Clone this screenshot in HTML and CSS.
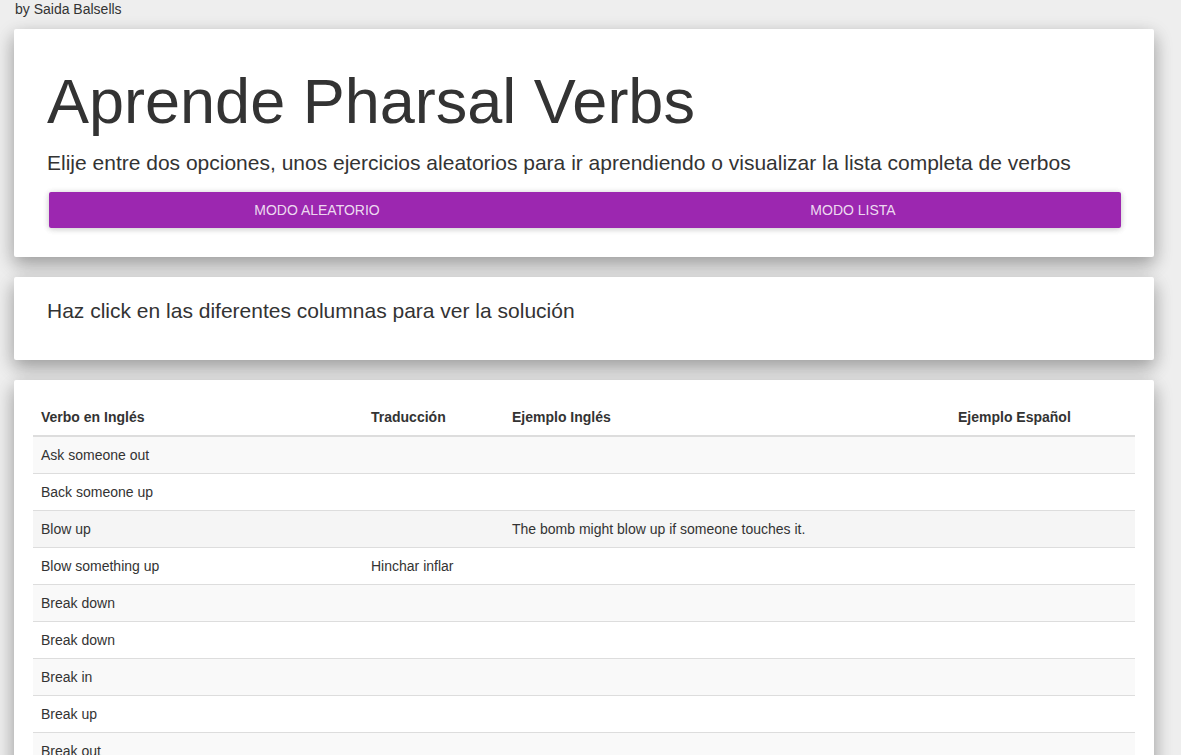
FILE: index.html
```html
<!DOCTYPE html>
<html lang="es">
<head>
<meta charset="utf-8">
<title>Aprende Pharsal Verbs</title>
<link rel="stylesheet" href="styles.css">
</head>
<body>
<div class="author">by Saida Balsells</div>
<main class="page">
  <section class="card hero">
    <h1 class="hero-title">Aprende Pharsal Verbs</h1>
    <p class="hero-text">Elije entre dos opciones, unos ejercicios aleatorios para ir aprendiendo o visualizar la lista completa de verbos</p>
    <div class="btn-group">
      <button class="btn">Modo aleatorio</button>
      <button class="btn">Modo lista</button>
    </div>
  </section>
  <section class="card hint">
    <p class="hint-text">Haz click en las diferentes columnas para ver la solución</p>
  </section>
  <section class="card table-card">
    <table class="verbs">
      <thead>
        <tr>
          <th class="c1">Verbo en Inglés</th>
          <th class="c2">Traducción</th>
          <th class="c3">Ejemplo Inglés</th>
          <th class="c4">Ejemplo Español</th>
        </tr>
      </thead>
      <tbody>
        <tr><td>Ask someone out</td><td></td><td></td><td></td></tr>
        <tr><td>Back someone up</td><td></td><td></td><td></td></tr>
        <tr class="hover"><td>Blow up</td><td></td><td>The bomb might blow up if someone touches it.</td><td></td></tr>
        <tr><td>Blow something up</td><td>Hinchar inflar</td><td></td><td></td></tr>
        <tr><td>Break down</td><td></td><td></td><td></td></tr>
        <tr><td>Break down</td><td></td><td></td><td></td></tr>
        <tr><td>Break in</td><td></td><td></td><td></td></tr>
        <tr><td>Break up</td><td></td><td></td><td></td></tr>
        <tr><td>Break out</td><td></td><td></td><td></td></tr>
        <tr><td>Bring someone down</td><td></td><td></td><td></td></tr>
        <tr><td>Bring someone up</td><td></td><td></td><td></td></tr>
      </tbody>
    </table>
  </section>
</main>
</body>
</html>
```
FILE: styles.css
```css
html, body {
  margin: 0;
  padding: 0;
}
body {
  background: #eeeeee;
  font-family: "Liberation Sans", Arial, sans-serif;
  color: #333333;
  font-size: 14px;
  line-height: 1.428571;
}
.author {
  padding-left: 15px;
  line-height: 18px;
  height: 18px;
  margin-bottom: 11px;
  font-size: 14px;
  color: #333;
}
.page {
  margin-left: 14px;
  width: 1140px;
  display: flex;
  flex-direction: column;
  gap: 20px;
}
.card {
  background: #ffffff;
  border-radius: 2px;
  box-shadow: 0 8px 17px 0 rgba(0,0,0,0.2), 0 6px 20px 0 rgba(0,0,0,0.19);
}
.hero {
  padding: 38px 33px 29px 33px;
}
.hero-title {
  margin: 0 0 12px 0;
  font-size: 63px;
  font-weight: 400;
  line-height: 69px;
  color: #333;
}
.hero-text {
  margin: 0 0 15px 0;
  font-size: 21px;
  line-height: 29px;
  font-weight: 400;
}
.btn-group {
  display: flex;
  margin-left: 2px;
  height: 36px;
  border-radius: 2px;
  box-shadow: 0 1px 6px 0 rgba(0,0,0,0.12), 0 1px 6px 0 rgba(0,0,0,0.12);
  overflow: hidden;
}
.btn {
  flex: 1 1 0;
  border: 0;
  margin: 0;
  background: #9c27b0;
  color: rgba(255,255,255,0.84);
  font-family: "Liberation Sans", Arial, sans-serif;
  font-size: 14px;
  text-transform: uppercase;
  padding: 0;
  cursor: pointer;
}
.hint {
  padding: 19px 33px 35px 33px;
}
.hint-text {
  margin: 0;
  font-size: 21px;
  line-height: 29px;
}
.table-card {
  padding: 19px 19px 40px 19px;
}
.verbs {
  width: 1102px;
  border-collapse: collapse;
  border-spacing: 0;
  font-size: 14px;
}
.verbs th {
  text-align: left;
  font-weight: 700;
  padding: 8px;
  line-height: 20px;
  border-bottom: 2px solid #dddddd;
  vertical-align: bottom;
  color: #333;
}
.verbs td {
  padding: 8px;
  line-height: 20px;
  border-top: 1px solid #dddddd;
  vertical-align: top;
  color: #333;
}
.verbs tbody tr:first-child td {
  border-top: 0;
}
.verbs tbody tr:nth-child(odd) {
  background: #f9f9f9;
}
.verbs tbody tr.hover {
  background: #f5f5f5;
}
.c1 { width: 314px; }
.c2 { width: 125px; }
.c3 { width: 430px; }
.c4 { width: 169px; }
```
